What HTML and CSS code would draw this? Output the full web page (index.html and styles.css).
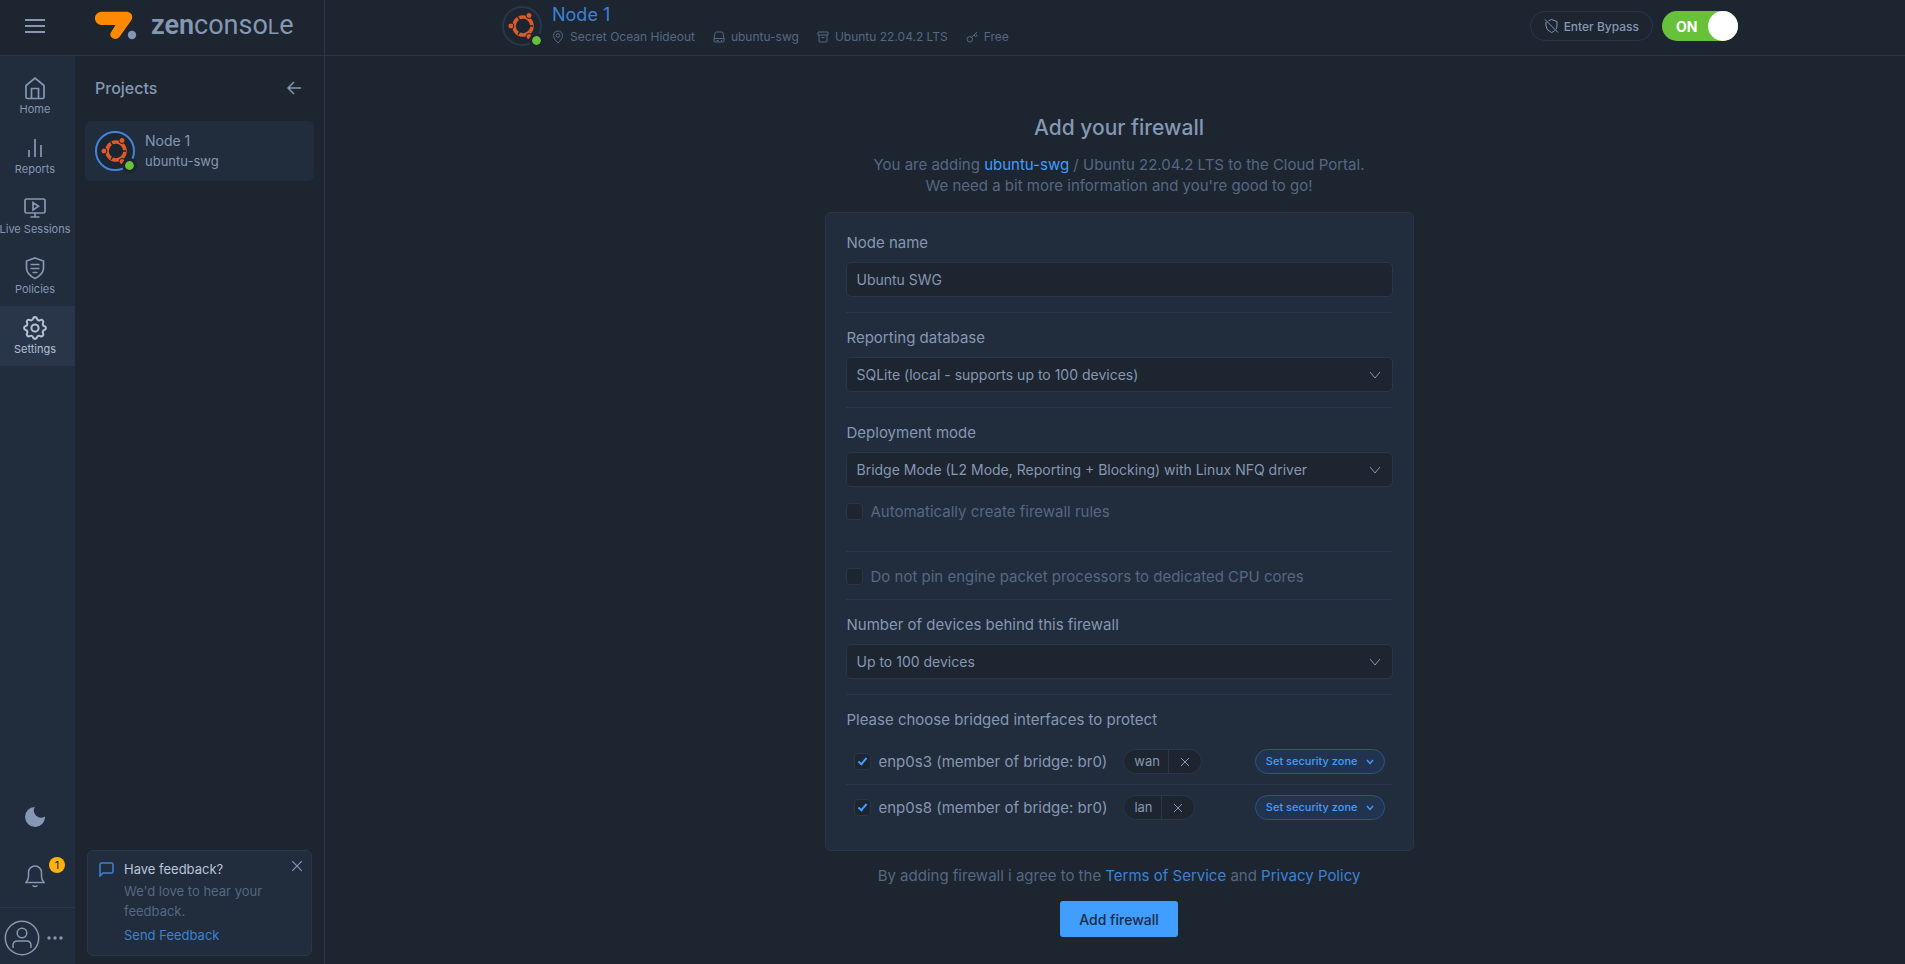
FILE: index.html
```html
<!DOCTYPE html>
<html lang="en">

<head>
  <meta charset="UTF-8">
  <meta name="viewport" content="width=device-width, initial-scale=1">
  <title>Zenconsole - Add your firewall</title>
  <link rel="stylesheet" href="styles.css">
</head>

<body>
  <!-- Shared shapes -->
  <svg class="defs" aria-hidden="true">
    <symbol id="ubuntu" viewBox="0 0 28 28">
      <circle cx="15" cy="14" r="9" fill="none" stroke="#dd5a2b" stroke-width="3.6" />
      <path d="M15 14L20 5.3M15 14L20 22.7M15 14H4" stroke="#1c2530" stroke-width="1.4" transform="rotate(60 15 14)" />
      <g fill="#dd5a2b" stroke="#1c2530" stroke-width="1">
        <circle cx="2.9" cy="14" r="3" />
        <circle cx="21" cy="3.5" r="3" />
        <circle cx="21" cy="24.5" r="3" />
      </g>
    </symbol>
    <symbol id="chevron" viewBox="0 0 12 8">
      <path d="M1 1l5 6 5-6" fill="none" stroke="currentColor" />
    </symbol>
    <symbol id="cross" viewBox="0 0 10 10">
      <path d="M1 1l8 8M9 1l-8 8" fill="none" stroke="currentColor" />
    </symbol>
  </svg>

  <header class="topbar">
    <div class="brand">
      <button class="icon-btn menu-btn" aria-label="Menu">
        <svg width="20" height="16" viewBox="0 0 20 16"><path d="M0 2h20M0 8h20M0 14h20" /></svg>
      </button>
      <a class="logo" href="#" aria-label="zenconsole">
        <svg width="42" height="30" viewBox="0 0 42 30">
          <path fill="#ff8a00" d="M6.500.8H31c5.500 0 8 4.800 5 9L24.500 25.800c-4 5-11.500.5-8.500-4.500l4.500-7.300H6.500a6.600 6.600 0 0 1 0-13.200z" />
          <circle cx="37" cy="24" r="4.200" fill="#8697b3" />
        </svg>
        <span class="logo-text"><b>zen</b>conso<span class="logo-l">L</span>e</span>
      </a>
    </div>
    <div class="topbar-main">
      <div class="topbar-inner">
        <div class="avatar">
          <svg width="28" height="28"><use href="#ubuntu" /></svg>
        </div>
        <div class="node-info">
          <a class="node-title" href="#">Node 1</a>
          <ul class="meta">
            <li>
              <svg width="12" height="14" viewBox="0 0 12 14"><path d="M6 13C3.500 10.500 1.500 8 1.500 5.500a4.500 4.500 0 0 1 9 0C10.500 8 8.500 10.500 6 13z" /><circle cx="6" cy="5.500" r="1.800" /></svg>
              Secret Ocean Hideout
            </li>
            <li>
              <svg width="12" height="14" viewBox="0 0 12 14"><path d="M1 9l1-6q.3-1 1.300-1h5.400q1 0 1.300 1l1 6v2q0 1-1 1H2q-1 0-1-1zM1 8.500h10M3.500 10.500h2M8 10.500h1" /></svg>
              ubuntu-swg
            </li>
            <li>
              <svg width="12" height="14" viewBox="0 0 12 14"><path d="M1 2h10v3H1zM2 5v6q0 1 1 1h6q1 0 1-1V5M4.500 7.500h3" /></svg>
              Ubuntu 22.04.2 LTS
            </li>
            <li>
              <svg width="12" height="14" viewBox="0 0 12 14"><circle cx="3.800" cy="9.300" r="2.700" /><path d="M5.800 7.300L11 2M8 5l1.800 1.800 1.400-1.400-1.700-1.800" /></svg>
              Free
            </li>
          </ul>
        </div>
        <button class="bypass">
          <svg width="15" height="16" viewBox="0 0 15 16"><path d="M4.500 2.800L7.500 1.500l5.500 2V8q0 2-1 3.300M2 4v4q0 4 5.500 6.500 1.800-.7 3.200-2M1 1.500l13 13" /></svg>
          Enter Bypass
        </button>
        <label class="toggle">
          <input type="checkbox" checked>
          <span>ON</span>
        </label>
      </div>
    </div>
  </header>

  <div class="layout">
    <nav class="rail">
      <a class="rail-item" href="#">
        <svg width="24" height="24" viewBox="0 0 24 24"><path d="M3 9.500L12 2l9 7.500V21q0 1.500-1.500 1.500h-15Q3 22.500 3 21zM8.500 22v-9.500h7V22" /></svg>
        Home
      </a>
      <a class="rail-item" href="#">
        <svg width="24" height="24" viewBox="0 0 24 24"><path d="M6 21v-7M12 21V3M18 21V9" /></svg>
        Reports
      </a>
      <a class="rail-item" href="#">
        <svg width="24" height="24" viewBox="0 0 24 24"><path d="M3.500 3h17q1.500 0 1.500 1.500v11q0 1.500-1.500 1.500h-17Q2 17 2 15.500v-11Q2 3 3.500 3zM12 17v4M7.500 21h9M10 6.500v7.500l5.500-3.700z" /></svg>
        Live Sessions
      </a>
      <a class="rail-item" href="#">
        <svg width="24" height="24" viewBox="0 0 24 24"><path d="M12 2l8.500 3v7c0 5-3.500 8-8.500 10.500C7 20 3.500 17 3.500 12V5zM7.500 8.500h9M7.500 12.500h9M9.500 16.500h5" /></svg>
        Policies
      </a>
      <a class="rail-item active" href="#">
        <svg width="24" height="24" viewBox="2 2 20 20"><circle cx="12" cy="12" r="3" /><path d="M10.300 4.300c.4-1.800 3-1.800 3.400 0a1.700 1.700 0 0 0 2.600 1.100c1.500-1 3.300.8 2.400 2.400a1.700 1.700 0 0 0 1 2.500c1.800.4 1.800 3 0 3.400a1.700 1.700 0 0 0-1 2.600c.9 1.500-.9 3.300-2.400 2.400a1.700 1.700 0 0 0-2.600 1c-.4 1.800-3 1.800-3.400 0a1.700 1.700 0 0 0-2.500-1c-1.600.9-3.400-.9-2.400-2.400a1.700 1.700 0 0 0-1.100-2.600c-1.800-.4-1.800-3 0-3.400a1.700 1.700 0 0 0 1.100-2.500c-1-1.600.8-3.400 2.400-2.400 1 .6 2.200 0 2.500-1.100z" /></svg>
        Settings
      </a>

      <div class="rail-bottom">
        <button class="icon-btn" aria-label="Dark mode">
          <svg width="20" height="20" viewBox="0 0 20 20"><path class="solid" d="M9.800 0a7.200 7.200 0 0 0 10.200 9.500A10 10 0 1 1 9.800 0z" /></svg>
        </button>
        <button class="icon-btn bell" aria-label="Notifications">
          <svg width="20" height="24" viewBox="0 0 20 24"><path d="M1 18.500c1.500-1.500 2.500-3.500 2.500-6V8.500a6.500 6.500 0 0 1 13 0v4c0 2.500 1 4.500 2.500 6zM7.500 21.500q2.500 2 5 0" /></svg>
          <span class="badge">1</span>
        </button>
        <div class="account">
          <button class="icon-btn" aria-label="Account">
            <svg width="36" height="36" viewBox="0 0 36 36"><circle cx="18" cy="18" r="16.700" /><circle cx="18" cy="13" r="4.800" /><path d="M9 28v-2.500q0-4.500 4.500-4.500h9q4.500 0 4.500 4.500V28" /></svg>
          </button>
          <button class="icon-btn" aria-label="More">
            <svg width="16" height="4" viewBox="0 0 16 4"><g class="solid"><circle cx="2" cy="2" r="1.700" /><circle cx="8" cy="2" r="1.700" /><circle cx="14" cy="2" r="1.700" /></g></svg>
          </button>
        </div>
      </div>
    </nav>

    <aside class="projects">
      <div class="projects-head">
        <h2>Projects</h2>
        <button class="icon-btn" aria-label="Collapse">
          <svg width="14" height="14" viewBox="0 0 14 14"><path d="M14 7H1M7 1L1 7l6 6" /></svg>
        </button>
      </div>
      <a class="project" href="#">
        <div class="avatar selected">
          <svg width="28" height="28"><use href="#ubuntu" /></svg>
        </div>
        <div>
          <div class="project-name">Node 1</div>
          <div class="project-host">ubuntu-swg</div>
        </div>
      </a>

      <div class="feedback">
        <svg class="feedback-icon" width="15" height="15" viewBox="0 0 15 15"><path d="M2.500 1h10Q14 1 14 2.500v7q0 1.500-1.500 1.500H4l-3 3V2.500Q1 1 2.500 1z" /></svg>
        <div>
          <h3>Have feedback?</h3>
          <p>We'd love to hear your feedback.</p>
          <a href="#">Send Feedback</a>
        </div>
        <button class="icon-btn feedback-close" aria-label="Close">
          <svg width="12" height="12"><use href="#cross" /></svg>
        </button>
      </div>
    </aside>

    <main>
      <h1>Add your firewall</h1>
      <p class="intro">You are adding <a href="#">ubuntu-swg</a> / Ubuntu 22.04.2 LTS to the Cloud Portal.<br>We need a bit more information and you're good to go!</p>

      <form>
        <div class="card">
          <div class="field">
            <label for="nodeName">Node name</label>
            <input type="text" id="nodeName" value="Ubuntu SWG">
          </div>

          <div class="field">
            <label for="database">Reporting database</label>
            <div class="select">
              <select id="database">
                <option>SQLite (local - supports up to 100 devices)</option>
              </select>
              <svg width="12" height="8"><use href="#chevron" /></svg>
            </div>
          </div>

          <div class="field with-check">
            <label for="mode">Deployment mode</label>
            <div class="select">
              <select id="mode">
                <option>Bridge Mode (L2 Mode, Reporting + Blocking) with Linux NFQ driver</option>
              </select>
              <svg width="12" height="8"><use href="#chevron" /></svg>
            </div>
            <label class="check"><input type="checkbox"> Automatically create firewall rules</label>
          </div>

          <div class="field compact">
            <label class="check"><input type="checkbox"> Do not pin engine packet processors to dedicated CPU cores</label>
          </div>

          <div class="field">
            <label for="devices">Number of devices behind this firewall</label>
            <div class="select">
              <select id="devices">
                <option>Up to 100 devices</option>
              </select>
              <svg width="12" height="8"><use href="#chevron" /></svg>
            </div>
          </div>

          <fieldset class="field interfaces">
            <legend>Please choose bridged interfaces to protect</legend>
            <div class="interface">
              <label class="check"><input type="checkbox" checked> <span>enp0s3 (member of bridge: br0)</span></label>
              <div class="tag">
                <span>wan</span>
                <button type="button" aria-label="Remove wan"><svg width="10" height="10"><use href="#cross" /></svg></button>
              </div>
              <button type="button" class="zone">Set security zone <svg width="8" height="6" viewBox="0 0 8 6"><path d="M1 1l3 3.500L7 1" /></svg></button>
            </div>
            <div class="interface">
              <label class="check"><input type="checkbox" checked> <span>enp0s8 (member of bridge: br0)</span></label>
              <div class="tag">
                <span>lan</span>
                <button type="button" aria-label="Remove lan"><svg width="10" height="10"><use href="#cross" /></svg></button>
              </div>
              <button type="button" class="zone">Set security zone <svg width="8" height="6" viewBox="0 0 8 6"><path d="M1 1l3 3.500L7 1" /></svg></button>
            </div>
          </fieldset>
        </div>

        <p class="terms">By adding firewall i agree to the <a href="#">Terms of Service</a> and <a href="#">Privacy Policy</a></p>
        <button type="submit" class="submit">Add firewall</button>
      </form>
    </main>
  </div>
</body>

</html>
```
FILE: styles.css
```css
:root {
  --bg: #1c2530;
  --panel: #212c3c;
  --active: #293548;
  --line: #2a374a;
  --text: #8697b3;
  --muted: #566882;
  --blue: #409eff;
  --link: #3c82d6;
}

* {
  box-sizing: border-box;
}

body {
  margin: 0;
  min-height: 100vh;
  display: flex;
  flex-direction: column;
  background: var(--bg);
  color: var(--text);
  font-family: Inter, "Open Sans", sans-serif;
  font-size: 15px;
  line-height: 21px;
}

h1, h2, h3, p, ul {
  margin: 0;
  padding: 0;
}

a {
  color: var(--link);
  text-decoration: none;
}

button, input, select {
  font: inherit;
  color: inherit;
}

button {
  cursor: pointer;
}

svg {
  display: block;
  flex: none;
  fill: none;
  stroke: currentColor;
}

svg .solid {
  fill: currentColor;
  stroke: none;
}

.defs {
  display: none;
}

.icon-btn {
  display: flex;
  padding: 0;
  border: 0;
  background: none;
}

/* Top bar */
.topbar {
  display: flex;
  height: 56px;
  border-bottom: 1px solid var(--line);
}

.brand {
  display: flex;
  align-items: center;
  width: 325px;
  padding: 0 25px 3px;
  border-right: 1px solid var(--line);
}

.menu-btn svg {
  stroke-width: 2;
}

.logo {
  display: flex;
  align-items: center;
  gap: 14px;
  margin-left: 50px;
  color: var(--text);
}

.logo svg {
  stroke: none;
}

.logo-text {
  font-family: Roboto, sans-serif;
  font-size: 27px;
  font-weight: 400;
  line-height: 30px;
}

.logo-text b {
  font-weight: 600;
}

.logo-l {
  font-size: 21px;
}

.topbar-main {
  flex: 1;
  padding-left: 10px;
}

.topbar-inner {
  display: flex;
  align-items: center;
  max-width: 1236px;
  height: 52px;
  margin: 0 auto;
}

.avatar {
  position: relative;
  display: flex;
  flex: none;
  align-items: center;
  justify-content: center;
  width: 40px;
  height: 40px;
  border: 2px solid var(--line);
  border-radius: 50%;
  background: var(--bg);
}

.avatar svg {
  stroke: none;
}

/* online dot */
.avatar::after {
  content: "";
  position: absolute;
  right: -4px;
  bottom: -4px;
  width: 9px;
  height: 9px;
  border: 3px solid var(--bg);
  border-radius: 50%;
  background: #67c23a;
  background-clip: padding-box;
}

.avatar.selected {
  border-color: #3f86d9;
}

.node-info {
  flex: 1;
  padding: 0 0 3px 10px;
}

.node-title {
  display: block;
  font-size: 18px;
  line-height: 24px;
}

.meta {
  display: flex;
  gap: 18px;
  list-style: none;
  color: var(--muted);
  font-size: 12px;
  line-height: 20px;
}

.meta li {
  display: flex;
  align-items: center;
  gap: 6px;
}

.bypass {
  display: flex;
  align-items: center;
  gap: 5px;
  height: 30px;
  padding: 0 13px;
  border: 1px solid var(--line);
  border-radius: 15px;
  background: none;
  font-size: 12px;
  font-weight: 500;
}

.toggle {
  display: flex;
  align-items: center;
  justify-content: space-between;
  width: 76px;
  height: 30px;
  margin-left: 9px;
  padding-left: 14px;
  border-radius: 15px;
  background: #67c23a;
  color: #fff;
  font-size: 14px;
  font-weight: 700;
}

.toggle::after {
  content: "";
  width: 30px;
  height: 30px;
  border-radius: 50%;
  background: #fff;
}

.toggle input {
  position: absolute;
  opacity: 0;
}

/* Columns */
.layout {
  display: flex;
  flex: 1;
}

.rail {
  display: flex;
  flex-direction: column;
  width: 75px;
  padding-top: 10px;
  background: var(--panel);
}

.rail-item {
  display: flex;
  flex-direction: column;
  align-items: center;
  height: 60px;
  padding: 10px 5px 0 0;
  color: var(--text);
  font-size: 11px;
  line-height: 18px;
  white-space: nowrap;
}

.rail-item svg {
  stroke-width: 1.7;
}

.rail-item.active {
  background: var(--active);
  color: #b3c0d6;
}

.rail-bottom {
  display: flex;
  flex-direction: column;
  margin-top: auto;
  padding-bottom: 1px;
}

.rail-bottom > .icon-btn {
  margin: 0 25px 37px;
}

.rail-bottom .bell {
  position: relative;
  margin-bottom: 19px;
}

.bell svg {
  stroke-width: 1.5;
}

.badge {
  position: absolute;
  top: -7px;
  left: 24px;
  width: 16px;
  height: 16px;
  border-radius: 50%;
  background: #ffb20f;
  color: #1c2531;
  font-size: 11px;
  line-height: 16px;
}

.account {
  display: flex;
  align-items: center;
  gap: 7px;
  height: 56px;
  padding: 4px 4px 0;
  border-top: 1px solid var(--line);
}

.account svg {
  stroke-width: 1.5;
}

.projects {
  display: flex;
  flex-direction: column;
  width: 250px;
  padding: 16px 10px 8px;
  border-right: 1px solid var(--line);
}

.projects-head {
  display: flex;
  align-items: center;
  justify-content: space-between;
  padding: 0 13px 0 10px;
  margin-bottom: 17px;
}

.projects-head svg {
  stroke-width: 1.5;
}

.projects-head h2 {
  font-size: 16px;
  font-weight: 500;
  line-height: 32px;
}

.project {
  display: flex;
  align-items: center;
  gap: 10px;
  height: 60px;
  padding: 0 10px;
  border-radius: 6px;
  background: var(--panel);
  color: var(--text);
}

.project-name {
  font-size: 14px;
}

.project-host {
  font-size: 13px;
}

.feedback {
  position: relative;
  display: flex;
  gap: 10px;
  margin: auto 2px 0;
  padding: 8px 11px 10px;
  border: 1px solid var(--line);
  border-radius: 6px;
  background: var(--panel);
  font-size: 13px;
  line-height: 20px;
}

.feedback-icon {
  margin-top: 3px;
  color: var(--link);
  stroke-width: 1.5;
}

.feedback h3 {
  color: #b9c5d9;
  font-size: 13px;
  font-weight: 400;
}

.feedback p {
  margin: 2px 0 4px;
  color: var(--muted);
}

.feedback-close {
  position: absolute;
  top: 9px;
  right: 8px;
}

/* Form */
main {
  flex: 1;
  padding: 56px 0 20px 8px;
  text-align: center;
}

h1 {
  font-size: 21px;
  font-weight: 500;
  line-height: 32px;
}

.intro {
  margin: 10px 0 16px;
  color: var(--muted);
}

.intro a {
  color: var(--blue);
}

.card {
  max-width: 589px;
  margin: 0 auto;
  padding: 19px 20px 20px;
  border: 1px solid var(--line);
  border-radius: 6px;
  background: var(--panel);
  text-align: left;
}

.field {
  margin: 0;
  padding: 0 0 15px;
  border: 0;
}

.field + .field {
  padding-top: 14px;
  border-top: 1px solid var(--line);
}

.field > label, legend {
  display: block;
  margin-bottom: 9px;
  padding: 0 1px;
}

.field input[type="text"], select {
  display: block;
  width: 100%;
  height: 35px;
  padding: 0 10px;
  border: 1px solid var(--line);
  border-radius: 5px;
  background: var(--bg);
  font-size: 14px;
  appearance: none;
}

.select {
  position: relative;
}

.select svg {
  position: absolute;
  top: 14px;
  right: 12px;
}

.field .check {
  display: flex;
  align-items: center;
  gap: 8px;
  margin: 0;
  padding: 0;
  color: var(--muted);
}

.check input {
  display: flex;
  flex: none;
  justify-content: center;
  width: 17px;
  height: 17px;
  margin: 0;
  border: 1px solid var(--line);
  border-radius: 4px;
  background: var(--bg);
  appearance: none;
}

.check input:checked::after {
  content: "";
  width: 3px;
  height: 7px;
  margin-top: 2px;
  border: solid var(--blue);
  border-width: 0 2px 2px 0;
  transform: rotate(40deg);
}

.field.with-check {
  padding-bottom: 29px;
}

.field.with-check .check {
  margin-top: 14px;
}

.field.compact {
  padding-bottom: 12px;
}

.field.interfaces {
  padding-bottom: 0;
}

/* keeps the legend inside the box, under the divider */
legend {
  float: left;
  width: 100%;
}

.interface {
  display: flex;
  clear: both;
  align-items: center;
  height: 45px;
  padding: 0 8px;
}

.interface + .interface {
  height: 46px;
  border-top: 1px solid var(--line);
}

.interface .check {
  color: var(--text);
}

.tag {
  display: flex;
  height: 25px;
  margin-left: 16px;
  border: 1px solid var(--line);
  border-radius: 13px;
  background: var(--bg);
  font-size: 13px;
  line-height: 23px;
}

.tag span {
  padding: 0 8px 0 10px;
}

.tag button {
  display: flex;
  align-items: center;
  padding: 0 11px;
  border: 0;
  border-left: 1px solid var(--line);
  background: none;
}

.zone {
  display: flex;
  align-items: center;
  gap: 8px;
  height: 25px;
  margin-left: auto;
  padding: 0 10px;
  border: 1px solid #2f5487;
  border-radius: 13px;
  background: #223350;
  color: var(--blue);
  font-size: 11px;
  font-weight: 500;
}

.zone svg {
  stroke-width: 1.4;
}

.terms {
  margin-top: 14px;
  color: var(--muted);
}

.submit {
  height: 36px;
  margin-top: 15px;
  padding: 0 19px;
  border: 0;
  border-radius: 3px;
  background: var(--blue);
  color: #1c2c44;
  font-size: 14px;
  font-weight: 500;
}
```
